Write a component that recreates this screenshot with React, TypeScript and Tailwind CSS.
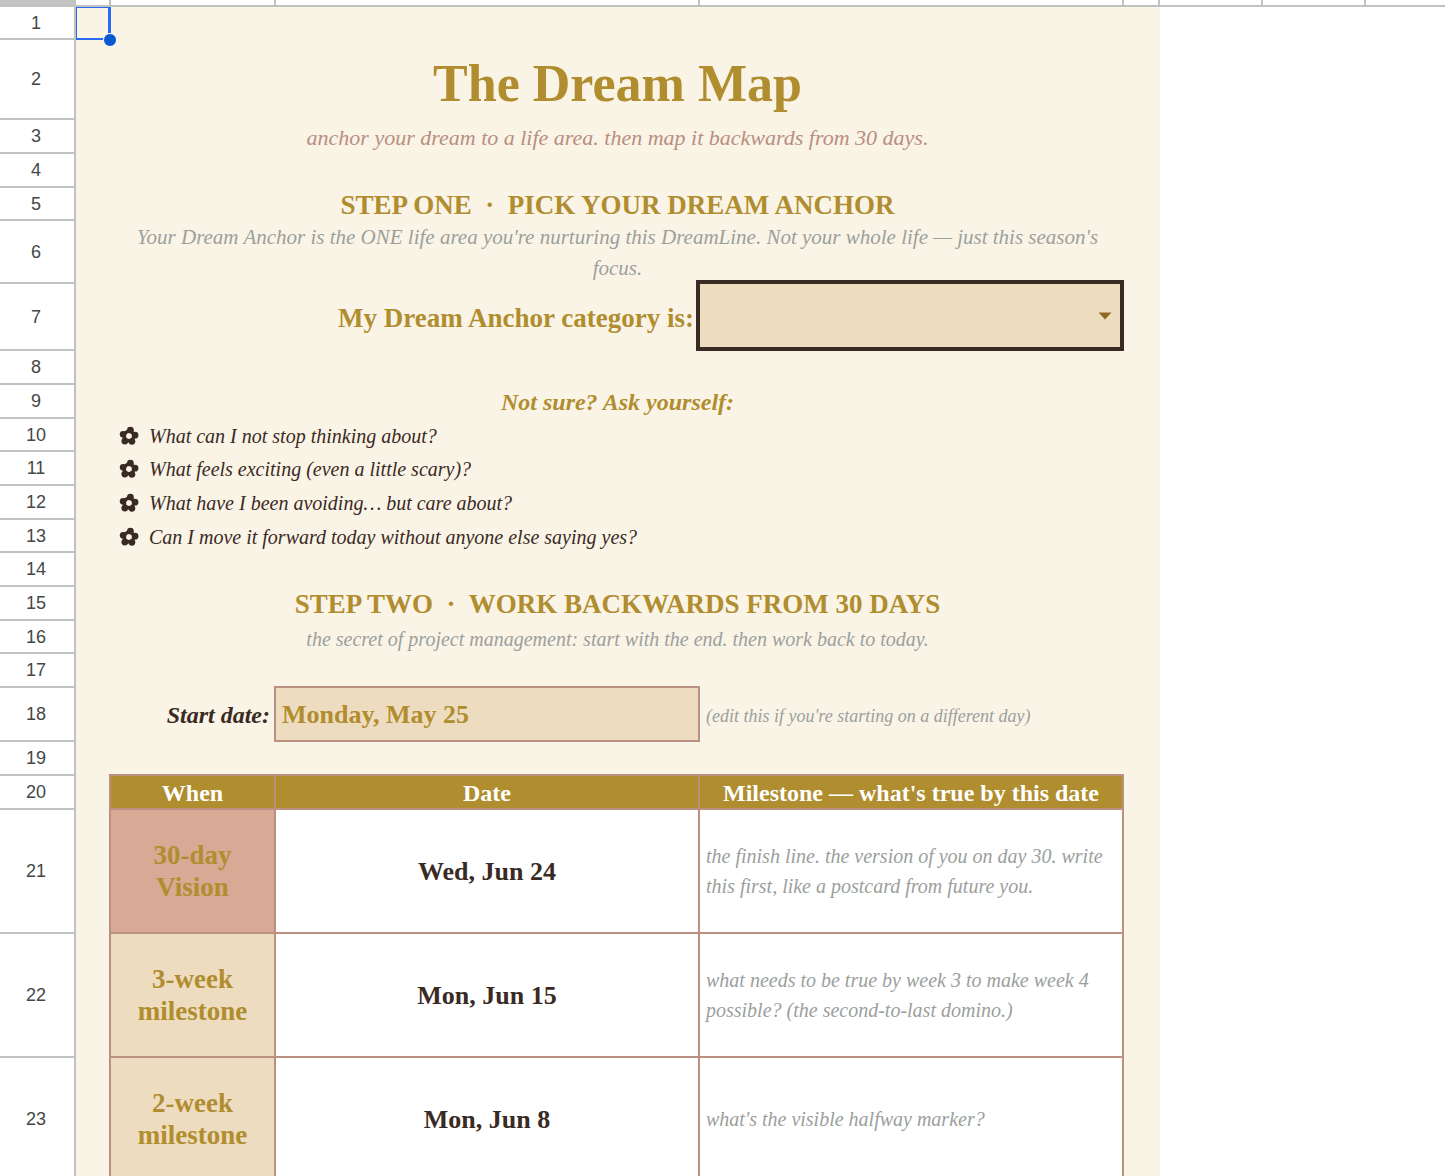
import { ReactNode, useState } from "react";

type Milestone = { row: number; when: string[]; date: string; note: string; highlight?: boolean };

const questions = [
  { row: 10, height: "h-[33px]", text: "What can I not stop thinking about?" },
  { row: 11, height: "h-[34px]", text: "What feels exciting (even a little scary)?" },
  { row: 12, height: "h-[34px]", text: "What have I been avoiding… but care about?" },
  { row: 13, height: "h-[33px]", text: "Can I move it forward today without anyone else saying yes?" },
];

const milestones: Milestone[] = [
  { row: 21, when: ["30-day", "Vision"], date: "Wed, Jun 24", note: "the finish line. the version of you on day 30. write this first, like a postcard from future you.", highlight: true },
  { row: 22, when: ["3-week", "milestone"], date: "Mon, Jun 15", note: "what needs to be true by week 3 to make week 4 possible? (the second-to-last domino.)" },
  { row: 23, when: ["2-week", "milestone"], date: "Mon, Jun 8", note: "what's the visible halfway marker?" },
];

const categories = ["Health", "Home", "Money", "Relationships", "Work"];

function Row({ n, height, first, last, children }: { n: number; height: string; first?: ReactNode; last?: ReactNode; children: ReactNode }) {
  return (
    <tr className={height}>
      <th scope="row" className="border-r-2 border-b-2 border-[#c0c2c2] bg-white font-['Liberation_Sans',sans-serif] text-lg leading-5 font-normal text-[#444746]"><div className="pr-0.5">{n}</div></th>
      {first ?? <td />}
      {children}
      {last ?? <td />}
      <td colSpan={3} className="bg-white" />
    </tr>
  );
}

function Blank({ n, height }: { n: number; height: string }) {
  return <Row n={n} height={height}><td colSpan={3} /></Row>;
}

function Flower() {
  return (
    <svg viewBox="0 0 20 20" className="h-5 w-5 shrink-0" fill="#3a2a24" aria-hidden="true">
      <circle cx="10" cy="10" r="4.6" fill="none" stroke="#3a2a24" strokeWidth="3.6" />
      <circle cx="11.4" cy="4.2" r="3.4" />
      <circle cx="16" cy="9.200" r="3.4" />
      <circle cx="12.900" cy="15.300" r="3.4" />
      <circle cx="5.800" cy="15.100" r="3.4" />
      <circle cx="4.200" cy="8.300" r="3.4" />
      <circle cx="10" cy="10" r="2.700" fill="#faf4e7" />
    </svg>
  );
}

export default function App() {
  const [category, setCategory] = useState("");
  const [startDate, setStartDate] = useState("Monday, May 25");

  return (
    <main className="h-screen overflow-auto bg-white font-['Liberation_Serif',serif] [scrollbar-width:none]">
      <table className="w-full table-fixed border-separate border-spacing-0 bg-[#faf4e7] [&_td]:p-0 [&_th]:p-0">
        <colgroup>
          <col className="w-[76px]" />
          <col className="w-[35px]" />
          <col className="w-[165px]" />
          <col />
          <col />
          <col className="w-9" />
          <col className="w-[103px]" />
          <col className="w-[103px]" />
          <col className="w-[79px]" />
        </colgroup>
        <thead>
          <tr className="h-[7px] bg-white [&>td]:border-r-2 [&>td]:border-b-2 [&>td]:border-[#c0c2c2] [&>td:last-child]:border-r-0">
            <td className="bg-[#c4c4c4]" /><td /><td /><td /><td /><td /><td /><td /><td />
          </tr>
        </thead>
        <tbody>
          <Row
            n={1}
            height="h-[33px]"
            first={
              <td className="relative">
                <div className="absolute inset-0 border-t border-r-[3px] border-b-2 border-l border-[#2a6af0]" />
                <div className="absolute -right-1.5 -bottom-[7px] size-3.5 rounded-full border border-white bg-[#0b57d0]" />
              </td>
            }
          >
            <td colSpan={3} />
          </Row>
          <Row n={2} height="h-20">
            <td colSpan={3} className="text-center"><h1 className="pt-2 text-[52px] leading-[60px] font-bold text-[#b08d2e]">The Dream Map</h1></td>
          </Row>
          <Row n={3} height="h-[34px]">
            <td colSpan={3} className="text-center text-[22px] leading-7 text-[#b98e80] italic"><p className="pt-0.5">anchor your dream to a life area. then map it backwards from 30 days.</p></td>
          </Row>
          <Blank n={4} height="h-[34px]" />
          <Row n={5} height="h-[33px]">
            <td colSpan={3} className="text-center"><h2 className="text-[27px] leading-7 font-bold whitespace-pre text-[#b08d2e]">STEP ONE  ·  PICK YOUR DREAM ANCHOR</h2></td>
          </Row>
          <Row n={6} height="h-[63px]">
            <td colSpan={3} className="text-center text-[21px] leading-[31px] text-[#9aa09c] italic"><p className="px-1">Your Dream Anchor is the ONE life area you're nurturing this DreamLine. Not your whole life — just this season's focus.</p></td>
          </Row>
          <Row n={7} height="h-[67px]">
            <td colSpan={2} className="text-right"><label htmlFor="category" className="mr-1.5 text-[27px] leading-8 font-bold text-[#b08d2e]">My Dream Anchor category is:</label></td>
            <td className="relative">
              <select id="category" value={category} onChange={(e) => setCategory(e.target.value)} className="absolute -top-1 -left-1 h-[calc(100%+4px)] w-[calc(100%+4px)] appearance-none border-4 border-[#3a2a24] bg-[#eedcc0] px-2 text-2xl font-bold text-[#b08d2e] outline-none">
                <option value="" />
                {categories.map((item) => <option key={item}>{item}</option>)}
              </select>
              <svg viewBox="0 0 14 8" className="pointer-events-none absolute top-7 right-3 h-2 w-3.5" fill="#8f6820" aria-hidden="true"><path d="M.5.5h13L7 7.500z" /></svg>
            </td>
          </Row>
          <Blank n={8} height="h-[34px]" />
          <Row n={9} height="h-[34px]">
            <td colSpan={3} className="text-center"><h3 className="text-2xl leading-7 font-bold text-[#b08d2e] italic">Not sure? Ask yourself:</h3></td>
          </Row>
          {questions.map((q) => (
            <Row key={q.row} n={q.row} height={q.height}>
              <td colSpan={3}><div className="flex items-center gap-2.5 pl-2 text-xl leading-7 text-[#3a2a24] italic"><Flower />{q.text}</div></td>
            </Row>
          ))}
          <Blank n={14} height="h-[34px]" />
          <Row n={15} height="h-[34px]">
            <td colSpan={3} className="text-center"><h2 className="text-[27px] leading-7 font-bold whitespace-pre text-[#b08d2e]">STEP TWO  ·  WORK BACKWARDS FROM 30 DAYS</h2></td>
          </Row>
          <Row n={16} height="h-[33px]">
            <td colSpan={3} className="text-center text-xl leading-7 text-[#9aa09c] italic"><p className="pt-0.5">the secret of project management: start with the end. then work back to today.</p></td>
          </Row>
          <Blank n={17} height="h-[34px]" />
          <Row n={18} height="h-[54px]">
            <td className="text-right"><label htmlFor="start-date" className="mr-1.5 text-2xl leading-7 font-bold text-[#3a2a24] italic">Start date:</label></td>
            <td className="relative">
              <input id="start-date" value={startDate} onChange={(e) => setStartDate(e.target.value)} className="absolute -top-0.5 -left-0.5 h-[calc(100%+2px)] w-[calc(100%+2px)] border-2 border-[#bb9080] bg-[#eedcc0] px-1.5 pt-0.5 text-[26px] leading-8 font-bold text-[#b08d2e] outline-none" />
            </td>
            <td className="text-lg leading-7 text-[#9aa09c] italic"><p className="px-1.5 pt-0.5">(edit this if you're starting on a different day)</p></td>
          </Row>
          <Row n={19} height="h-[34px]"><td colSpan={3} className="border-b-2 border-[#bb9080]" /></Row>
          <Row n={20} height="h-[34px]" first={<td className="relative border-r-2 border-[#bb9080] after:absolute after:-top-0.5 after:-right-0.5 after:size-0.5 after:bg-[#bb9080]" />}>
            {["When", "Date", "Milestone — what's true by this date"].map((title) => (
              <th key={title} scope="col" className="border-r-2 border-b-2 border-[#bb9080] bg-[#b08d2e] text-2xl leading-7 font-bold text-white"><div className="pt-0.5">{title}</div></th>
            ))}
          </Row>
          {milestones.map((m) => (
            <Row key={m.row} n={m.row} height="h-[124px]" first={<td className="border-r-2 border-[#bb9080]" />}>
              <td className={`border-r-2 border-b-2 border-[#bb9080] text-center text-[27px] leading-8 font-bold text-[#b08d2e] ${m.highlight ? "bg-[#d8a994]" : "bg-[#eedcc0]"}`}>{m.when[0]}<br />{m.when[1]}</td>
              <td className="border-r-2 border-b-2 border-[#bb9080] bg-white text-center text-[26px] leading-8 font-bold text-[#3a2a24]"><div className="pt-0.5">{m.date}</div></td>
              <td className="border-r-2 border-b-2 border-[#bb9080] bg-white text-xl leading-[30px] text-[#9aa09c] italic"><p className="px-1.5">{m.note}</p></td>
            </Row>
          ))}
        </tbody>
      </table>
    </main>
  );
}
